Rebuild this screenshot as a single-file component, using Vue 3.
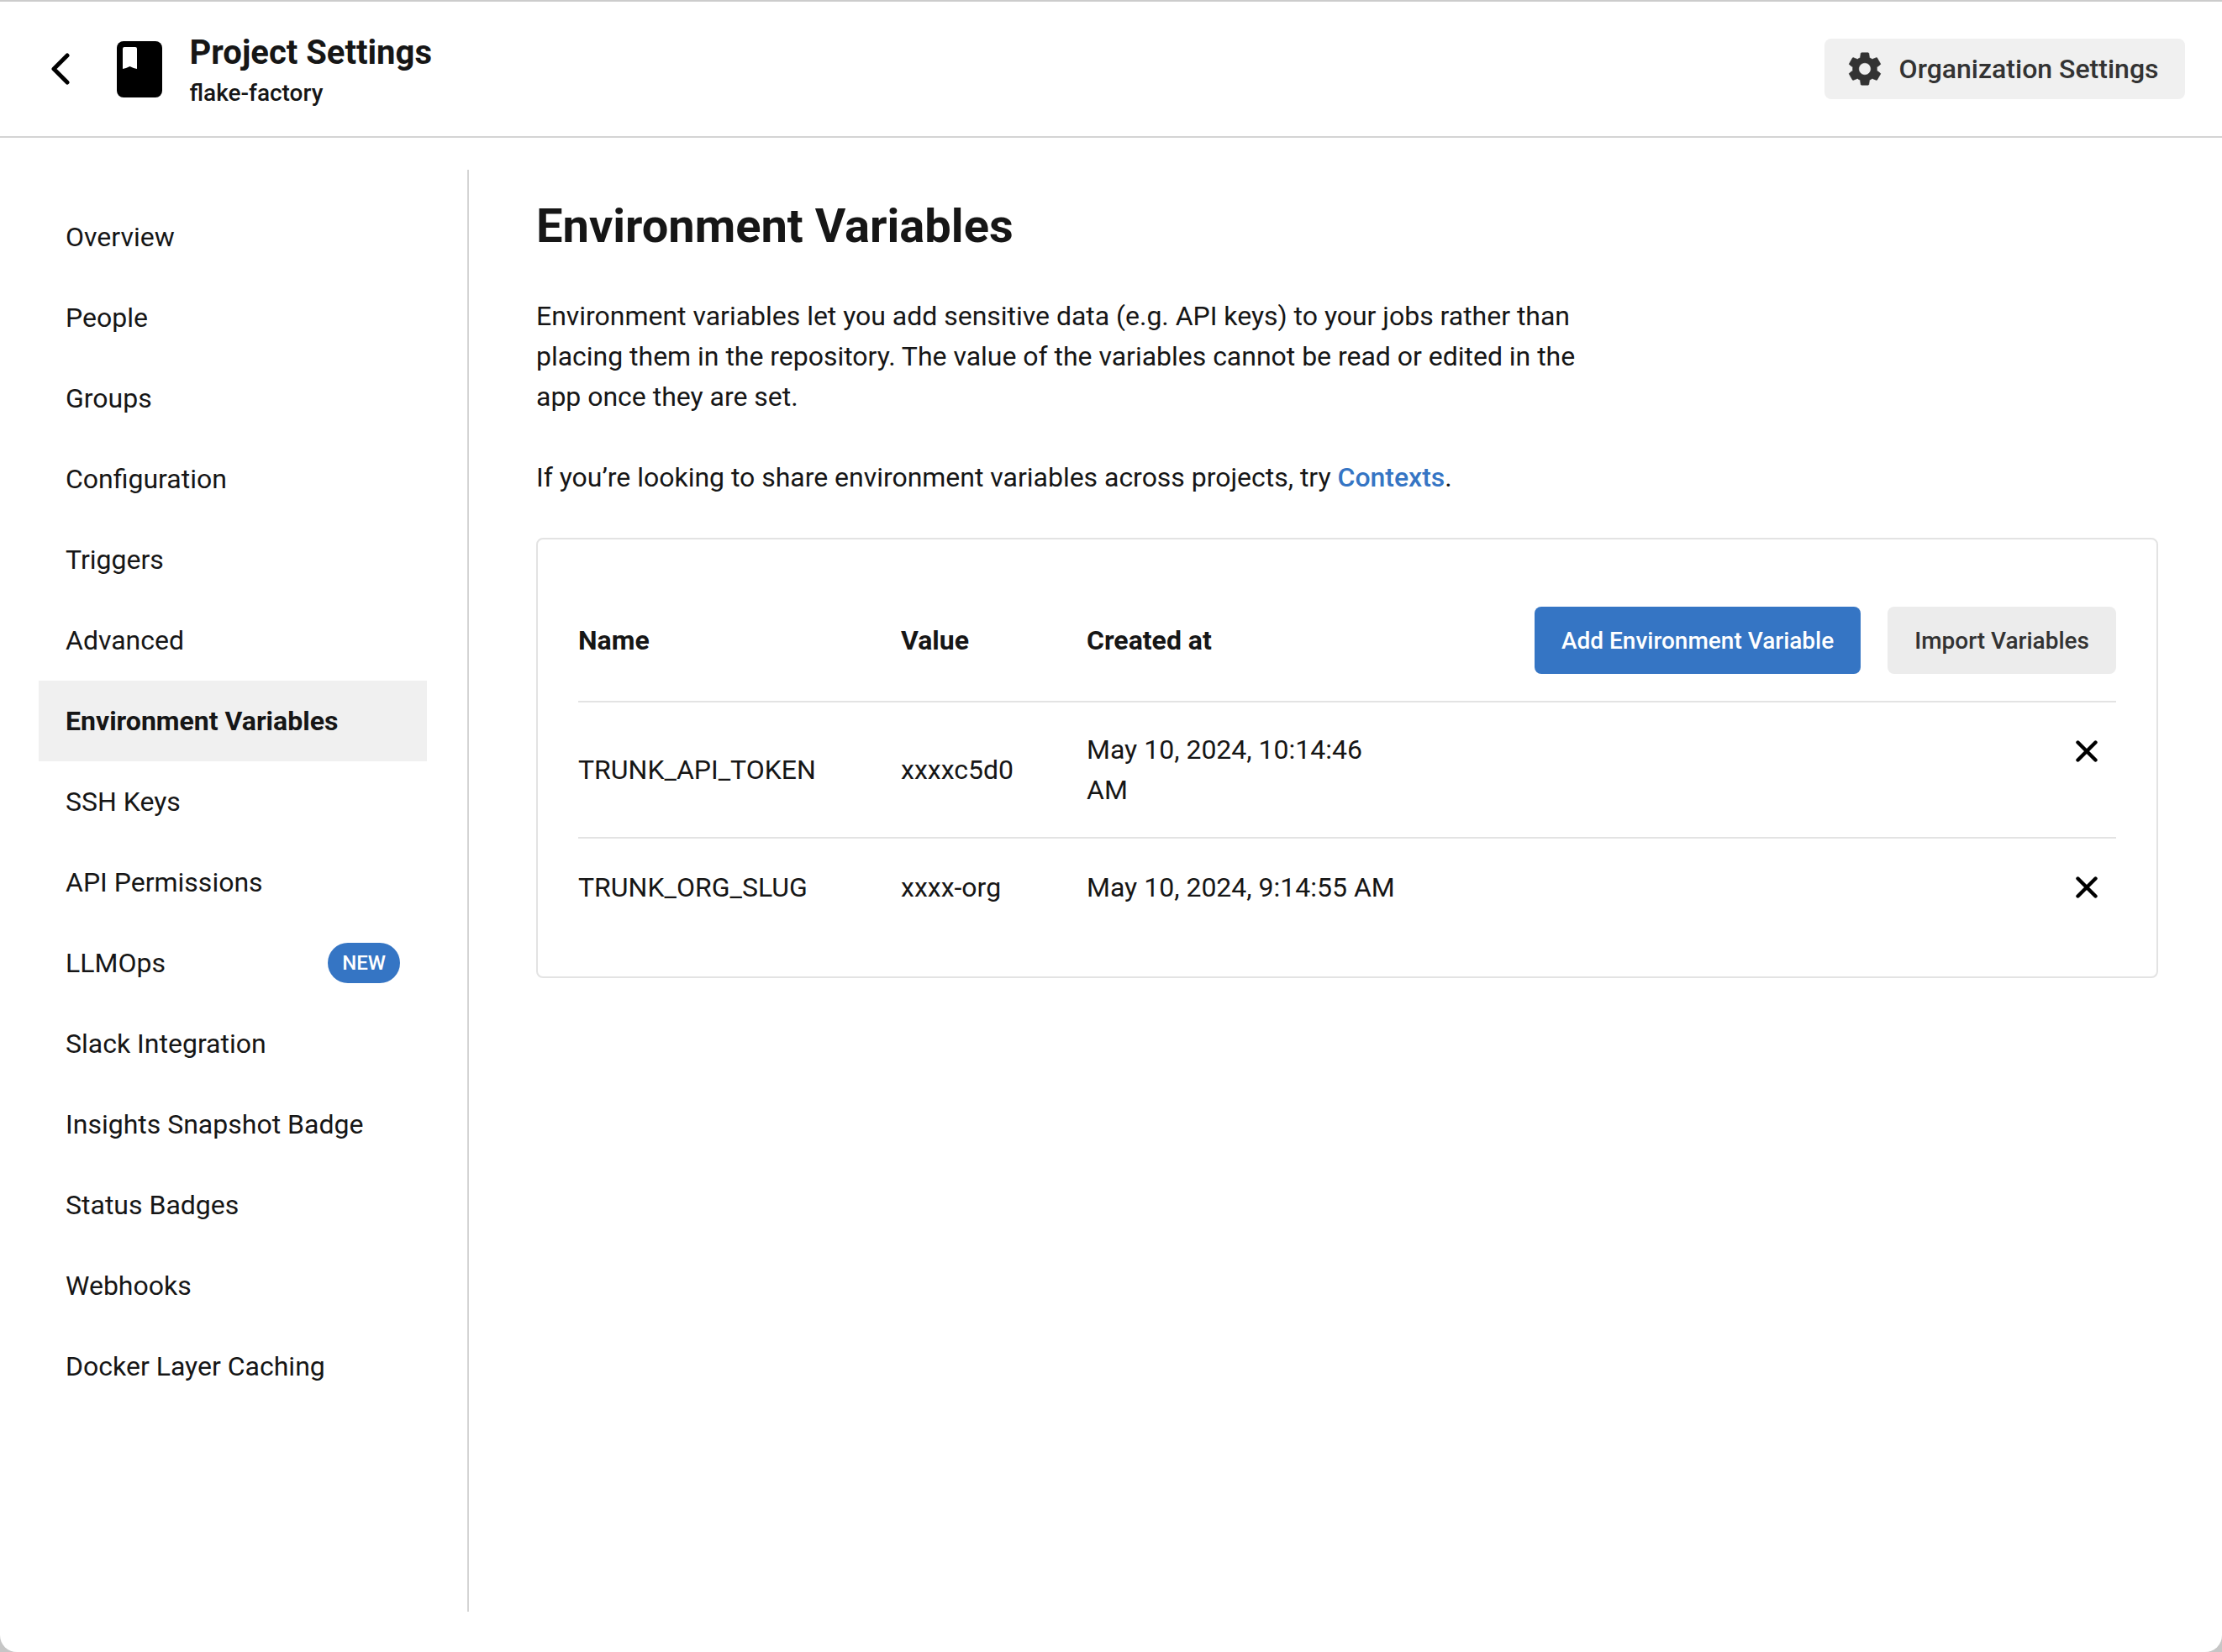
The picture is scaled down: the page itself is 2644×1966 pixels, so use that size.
<script setup>
const navItems = [
  { label: 'Overview' },
  { label: 'People' },
  { label: 'Groups' },
  { label: 'Configuration' },
  { label: 'Triggers' },
  { label: 'Advanced' },
  { label: 'Environment Variables', active: true },
  { label: 'SSH Keys' },
  { label: 'API Permissions' },
  { label: 'LLMOps', badge: 'NEW' },
  { label: 'Slack Integration' },
  { label: 'Insights Snapshot Badge' },
  { label: 'Status Badges' },
  { label: 'Webhooks' },
  { label: 'Docker Layer Caching' }
]
const variables = [
  { name: 'TRUNK_API_TOKEN', value: 'xxxxc5d0', created: 'May 10, 2024, 10:14:46 AM' },
  { name: 'TRUNK_ORG_SLUG', value: 'xxxx-org', created: 'May 10, 2024, 9:14:55 AM' }
]
</script>

<template>
  <div class="page">
    <header class="topbar">
      <a class="back" aria-label="Back">
        <svg width="24" height="38" viewBox="0 0 24 38">
          <path d="M20 3 L4 19 L20 35" fill="none" stroke="#000" stroke-width="5" stroke-linecap="round" stroke-linejoin="round" />
        </svg>
      </a>
      <svg class="book" width="54" height="67" viewBox="0 0 54 67">
        <rect x="0" y="0" width="54" height="67" rx="8" fill="#000" />
        <path d="M7 9 a2 2 0 0 1 2-2 H22 a2 2 0 0 1 2 2 V33 L20 32 L15.5 30 L11 32 L7 33 Z" fill="#fff" />
      </svg>
      <div class="titles">
        <div class="title">Project Settings</div>
        <div class="subtitle">flake-factory</div>
      </div>
      <button class="org-btn">
        <svg width="48" height="48" viewBox="0 0 24 24">
          <path fill="#333" stroke="#333" stroke-width=".3" d="M19.14 12.94c.04-.3.06-.61.06-.94 0-.32-.02-.64-.07-.94l2.03-1.58c.18-.14.23-.41.12-.61l-1.92-3.32c-.12-.22-.37-.29-.59-.22l-2.39.96c-.5-.38-1.03-.7-1.62-.94l-.36-2.54c-.04-.24-.24-.41-.48-.41h-3.84c-.24 0-.43.17-.47.41l-.36 2.54c-.59.24-1.13.57-1.62.94l-2.39-.96c-.22-.08-.47 0-.59.22L2.74 8.87c-.12.21-.08.47.12.61l2.03 1.58c-.05.3-.09.63-.09.94s.02.64.07.94l-2.03 1.58c-.18.14-.23.41-.12.61l1.92 3.32c.12.22.37.29.59.22l2.39-.96c.5.38 1.03.7 1.62.94l.36 2.54c.05.24.24.41.48.41h3.84c.24 0 .44-.17.47-.41l.36-2.54c.59-.24 1.13-.56 1.62-.94l2.39.96c.22.08.47 0 .59-.22l1.92-3.32c.12-.22.07-.47-.12-.61l-2.01-1.58zM12 15.6c-1.98 0-3.6-1.62-3.6-3.6s1.62-3.6 3.6-3.6 3.6 1.62 3.6 3.6-1.62 3.6-3.6 3.6z" />
        </svg>
        <span>Organization Settings</span>
      </button>
    </header>

    <div class="content">
      <nav class="sidebar">
        <a v-for="item in navItems" :key="item.label" class="nav-item" :class="{ active: item.active }">
          <span>{{ item.label }}</span>
          <span v-if="item.badge" class="badge">{{ item.badge }}</span>
        </a>
      </nav>

      <main class="main">
        <h1>Environment Variables</h1>
        <p class="intro">Environment variables let you add sensitive data (e.g. API keys) to your jobs rather than placing them in the repository. The value of the variables cannot be read or edited in the app once they are set.</p>
        <p class="intro">If you’re looking to share environment variables across projects, try <a class="link">Contexts</a>.</p>

        <section class="card">
          <table>
            <colgroup>
              <col class="col-name" />
              <col class="col-value" />
              <col class="col-created" />
              <col class="col-actions" />
            </colgroup>
            <thead>
              <tr>
                <th>Name</th>
                <th>Value</th>
                <th>Created at</th>
                <th>
                  <div class="actions">
                    <button class="btn primary">Add Environment Variable</button>
                    <button class="btn secondary">Import Variables</button>
                  </div>
                </th>
              </tr>
            </thead>
            <tbody>
              <tr v-for="row in variables" :key="row.name">
                <td>{{ row.name }}</td>
                <td>{{ row.value }}</td>
                <td><div class="created">{{ row.created }}</div></td>
                <td class="del-cell">
                  <button class="del" aria-label="Delete">
                    <svg width="26" height="26" viewBox="0 0 26 26">
                      <path d="M2.5 2.5 L23.5 23.5 M23.5 2.5 L2.5 23.5" fill="none" stroke="#000" stroke-width="4.4" stroke-linecap="round" />
                    </svg>
                  </button>
                </td>
              </tr>
            </tbody>
          </table>
        </section>
      </main>
    </div>
  </div>
</template>

<style>
html, body { background: #c6c6c6; margin: 0; }
</style>

<style scoped>
* { box-sizing: border-box; }
.page {
  min-height: 100vh;
  display: flex;
  flex-direction: column;
  background: #fff;
  border-top: 2px solid #cccccc;
  border-radius: 0 0 20px 20px;
  font-family: Roboto, "Liberation Sans", sans-serif;
  font-size: 32px;
  color: #161616;
}
.topbar {
  display: flex;
  align-items: center;
  height: 162px;
  border-bottom: 2px solid #d4d4d4;
  padding: 0 44px 0 60px;
}
.back { display: flex; width: 79px; }
.book { flex: none; margin-right: 32.5px; }
.titles { display: flex; flex-direction: column; margin-top: 4px; }
.title { font-size: 40px; line-height: 48px; font-weight: 700; }
.subtitle { font-size: 28px; line-height: 36px; font-weight: 500; margin-top: 6px; }
.org-btn {
  margin-left: auto;
  display: flex;
  align-items: center;
  gap: 17px;
  height: 72px;
  padding: 0 31.5px 0 24px;
  border: 0;
  border-radius: 8px;
  background: #f0f0f0;
  color: #333;
  font: 500 32px Roboto, sans-serif;
  white-space: nowrap;
}
.content {
  flex: 1;
  display: flex;
  padding: 38px 0 48px;
}
.sidebar {
  width: 558px;
  flex: none;
  padding: 32px 48px 0 46px;
  border-right: 2px solid #d4d4d4;
}
.nav-item {
  display: flex;
  align-items: center;
  justify-content: space-between;
  height: 96px;
  padding: 0 32px;
}
.nav-item.active { background: #f0f0f0; font-weight: 700; }
.badge {
  width: 86px;
  height: 48px;
  border-radius: 24px;
  background: #3575c4;
  color: #fff;
  font-size: 24px;
  font-weight: 500;
  display: flex;
  align-items: center;
  justify-content: center;
}
.main {
  flex: 1;
  min-width: 0;
  padding: 35px 76px 0 80px;
}
h1 {
  margin: 0 0 51px;
  font-size: 56px;
  line-height: 64px;
  font-weight: 700;
}
.intro {
  margin: 0 0 48px;
  max-width: 1280px;
  line-height: 48px;
  letter-spacing: -0.02px;
}
.link { color: #3575c4; font-weight: 500; }
.card {
  border: 2px solid #e3e3e3;
  border-radius: 8px;
  padding: 48px;
}
table {
  width: 100%;
  table-layout: fixed;
  border-collapse: separate;
  border-spacing: 0;
}
.col-name { width: 384px; }
.col-value { width: 221px; }
.col-created { width: 533px; }
th {
  padding: 32px 0;
  text-align: left;
  font-weight: 700;
}
td {
  padding: 32px 0;
  border-top: 2px solid #e3e3e3;
  line-height: 48px;
  vertical-align: middle;
}
.created { max-width: 372px; }
.actions { display: flex; justify-content: flex-end; gap: 32px; }
.btn {
  height: 80px;
  padding: 0 32px;
  border: 0;
  border-radius: 8px;
  font: 500 28px Roboto, sans-serif;
  white-space: nowrap;
}
.primary { background: #3575c4; color: #fff; }
.secondary { background: #ececec; color: #333; }
.del-cell { vertical-align: top; text-align: right; }
.del {
  display: inline-flex;
  align-items: center;
  justify-content: center;
  width: 71px;
  height: 52px;
  padding: 0;
  border: 0;
  background: none;
  vertical-align: top;
}
</style>
